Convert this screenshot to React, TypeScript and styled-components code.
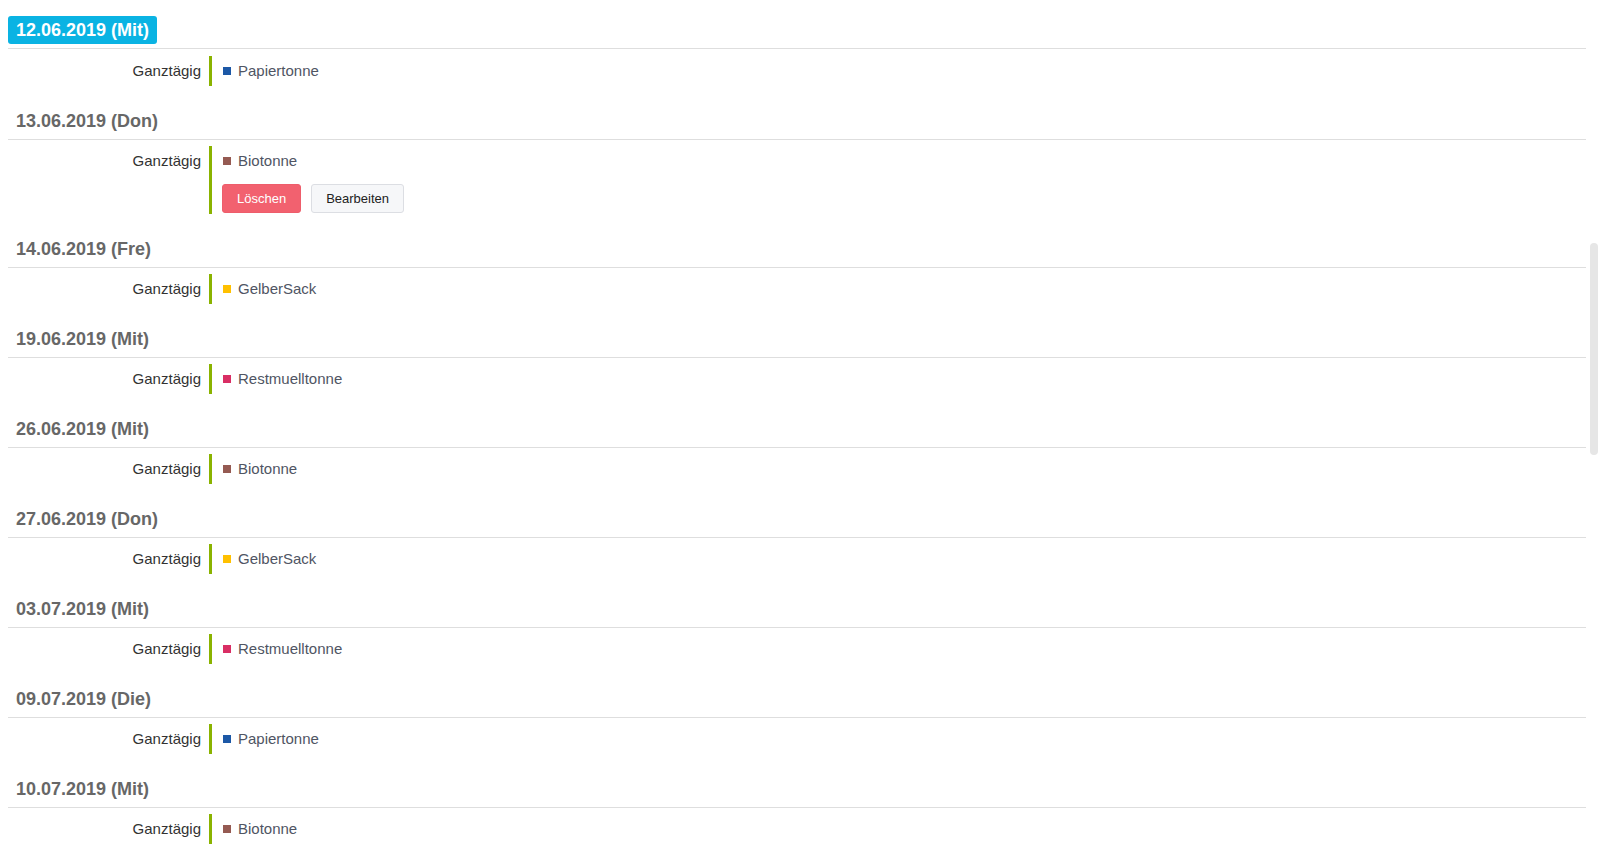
import React from "react";
import styled, { createGlobalStyle } from "styled-components";

const GlobalStyle = createGlobalStyle`
  html, body {
    margin: 0;
    padding: 0;
    background: #ffffff;
    font-family: "Liberation Sans", Arial, sans-serif;
  }
  * { box-sizing: border-box; }
`;

type Category = "Papiertonne" | "Biotonne" | "GelberSack" | "Restmuelltonne";

const categoryColor: Record<Category, string> = {
  Papiertonne: "#1c58a6",
  Biotonne: "#955a52",
  GelberSack: "#ffc000",
  Restmuelltonne: "#d92e64",
};

interface Day {
  date: string;
  active?: boolean;
  category: Category;
  actions?: boolean;
}

const days: Day[] = [
  { date: "12.06.2019 (Mit)", active: true, category: "Papiertonne" },
  { date: "13.06.2019 (Don)", category: "Biotonne", actions: true },
  { date: "14.06.2019 (Fre)", category: "GelberSack" },
  { date: "19.06.2019 (Mit)", category: "Restmuelltonne" },
  { date: "26.06.2019 (Mit)", category: "Biotonne" },
  { date: "27.06.2019 (Don)", category: "GelberSack" },
  { date: "03.07.2019 (Mit)", category: "Restmuelltonne" },
  { date: "09.07.2019 (Die)", category: "Papiertonne" },
  { date: "10.07.2019 (Mit)", category: "Biotonne" },
];

const Page = styled.div`
  position: relative;
  height: 100vh;
  overflow: hidden;
  padding: 16px 20px 0 8px;
`;

const Section = styled.section`
  margin-bottom: 22px;
`;

const Heading = styled.div<{ $active?: boolean }>`
  display: flex;
  padding-bottom: 4px;
  border-bottom: 1px solid #dedede;
  margin-bottom: ${(p) => (p.$active ? 7 : 6)}px;
`;

const DateTitle = styled.h3<{ $active?: boolean }>`
  margin: 0;
  padding: 0 8px;
  font-size: 18px;
  font-weight: bold;
  line-height: ${(p) => (p.$active ? 28 : 27)}px;
  color: ${(p) => (p.$active ? "#ffffff" : "#676767")};
  background: ${(p) => (p.$active ? "#0ab3e3" : "transparent")};
  border-radius: 3px;
`;

const EventRow = styled.div`
  display: grid;
  grid-template-columns: 193px 1fr;
  column-gap: 8px;
`;

const TimeLabel = styled.div`
  text-align: right;
  font-size: 15px;
  line-height: 30px;
  color: #333333;
`;

const EventBody = styled.div`
  border-left: 3px solid #8ab300;
  padding-left: 10px;
`;

const EventTitle = styled.div`
  display: flex;
  align-items: center;
  padding-left: 1px;
  font-size: 15px;
  line-height: 30px;
  color: #4f5563;
`;

const Swatch = styled.span<{ $color: string }>`
  width: 8px;
  height: 8px;
  margin-right: 7px;
  background: ${(p) => p.$color};
`;

const Actions = styled.div`
  display: flex;
  gap: 10px;
  margin-top: 8px;
  padding-bottom: 1px;
`;

const Button = styled.button<{ $variant: "danger" | "light" }>`
  font-family: "Liberation Sans", Arial, sans-serif;
  font-size: 13px;
  line-height: 19px;
  padding: 4px 14px;
  border-radius: 3px;
  cursor: pointer;
  border: 1px solid ${(p) => (p.$variant === "danger" ? "#ee5d6b" : "#dcdee3")};
  background: ${(p) => (p.$variant === "danger" ? "#f2616f" : "#f6f7f9")};
  color: ${(p) => (p.$variant === "danger" ? "#ffffff" : "#222222")};
`;

const ScrollThumb = styled.div`
  position: absolute;
  right: 8px;
  top: 243px;
  width: 8px;
  height: 212px;
  border-radius: 4px;
  background: #e6e6e6;
`;

export default function App() {
  return (
    <>
      <GlobalStyle />
      <Page>
        {days.map((d) => (
          <Section key={d.date}>
            <Heading $active={d.active}>
              <DateTitle $active={d.active}>{d.date}</DateTitle>
            </Heading>
            <EventRow>
              <TimeLabel>Ganztägig</TimeLabel>
              <EventBody>
                <EventTitle>
                  <Swatch $color={categoryColor[d.category]} />
                  {d.category}
                </EventTitle>
                {d.actions && (
                  <Actions>
                    <Button $variant="danger">Löschen</Button>
                    <Button $variant="light">Bearbeiten</Button>
                  </Actions>
                )}
              </EventBody>
            </EventRow>
          </Section>
        ))}
        <ScrollThumb />
      </Page>
    </>
  );
}
